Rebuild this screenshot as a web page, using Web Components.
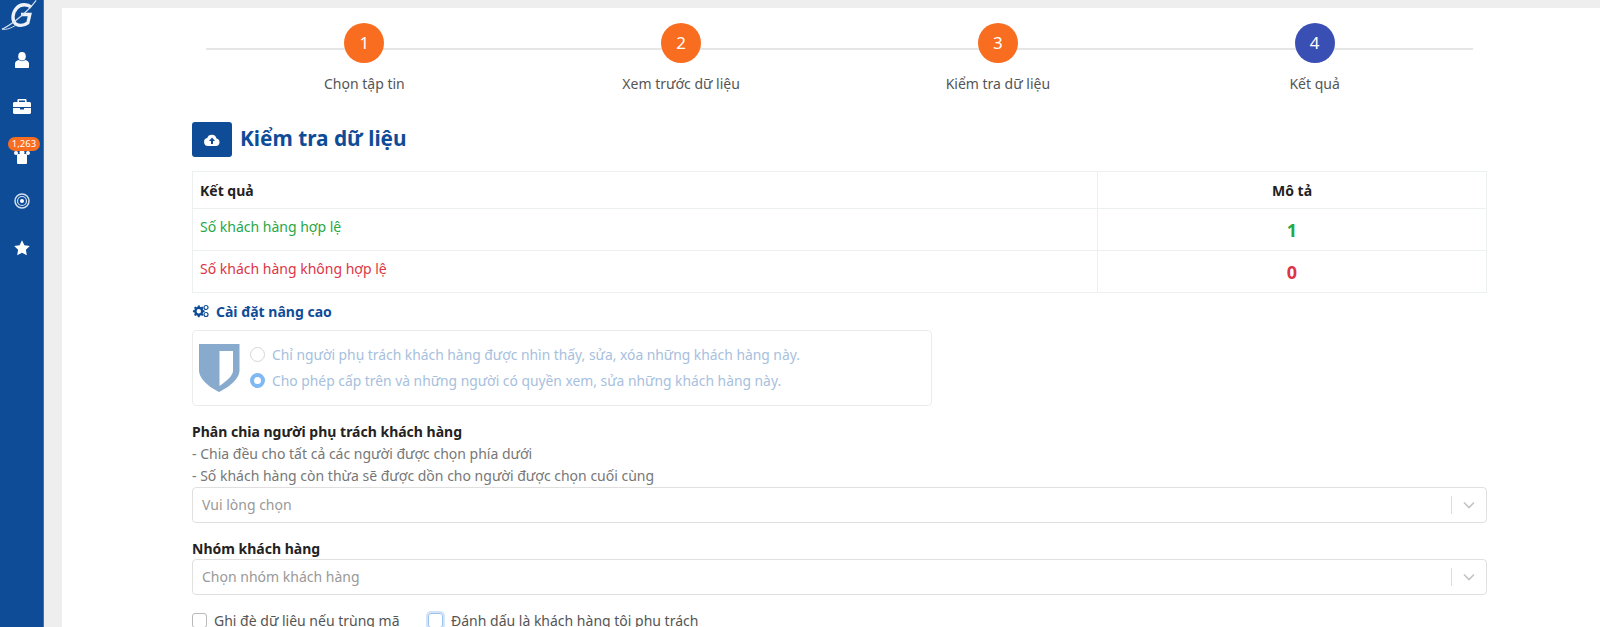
<!DOCTYPE html>
<html lang="vi"><head><meta charset="utf-8"><title>Kiểm tra dữ liệu</title>
<style>
html,body{margin:0;height:627px;overflow:hidden;background:#eee;font-family:"Noto Sans","Open Sans",sans-serif;font-size:14px;color:#444}
app-shell{height:627px}
</style></head><body>
<app-shell>
  <side-bar slot="side"></side-bar>
  <wizard-steps></wizard-steps>
  <page-title>Kiểm tra dữ liệu</page-title>
  <result-table></result-table>
  <advanced-settings></advanced-settings>
  <form-section><b slot="label">Phân chia người phụ trách khách hàng</b><div slot="help">- Chia đều cho tất cả các người được chọn phía dưới</div><div slot="help">- Số khách hàng còn thừa sẽ được dồn cho người được chọn cuối cùng</div><select-box>Vui lòng chọn</select-box></form-section>
  <form-section style="margin-top:15px"><b slot="label">Nhóm khách hàng</b><select-box style="margin-top:-1px">Chọn nhóm khách hàng</select-box></form-section>
  <check-row></check-row>
</app-shell>
<script>
function def(name,html){customElements.define(name,class extends HTMLElement{constructor(){super();this.attachShadow({mode:'open'}).innerHTML=html}})}
def('app-shell',`<style>:host{display:flex;background:#eee}
.side{flex:none}.wrap{flex:1;padding:8px 0 0 18px;min-width:0}
.page{background:#fff;height:619px;box-sizing:border-box;padding:0 113px 0 130px;overflow:hidden}</style>
<div class="side"><slot name="side"></slot></div><div class="wrap"><div class="page"><slot></slot></div></div>`);
def('side-bar',`<style>:host{display:flex;flex-direction:column;align-items:center;width:44px;height:627px;box-sizing:border-box;background:#0f4c98;border-right:1px solid #3f72b2;color:#fff}
.logo{height:31px;width:100%;flex:none}.it{height:47px;display:flex;align-items:center;justify-content:center;position:relative;flex:none;width:100%}
svg{display:block}.badge{position:absolute;left:8px;top:7px;width:32px;height:14px;border-radius:7px;background:#f96d20;color:#fff;font-size:9.5px;line-height:14px;text-align:center}</style>
<svg class="logo" viewBox="0 0 44 31"><path d="M32 7C28 3.500 21 3.500 17 8 12.500 13 12 21 16 24c4 2.500 9 1.500 12.500-1l2-8.500h-9" fill="none" stroke="#eef2f8" stroke-width="3.400"/><path d="M2 29.500C12 25 28 12 37 0" fill="none" stroke="#d5e0ef" stroke-width="1.200"/><path d="M2 29.500c5 1 10-1.500 14-4" fill="none" stroke="#d5e0ef" stroke-width="1"/></svg>
<div class="it" style="margin-top:5px"><svg width="14" height="16" viewBox="0 0 14 16" fill="#fff"><ellipse cx="7" cy="4.300" rx="3.800" ry="4.300"/><path d="M0 15v-3.500C0 9.500 2 8.500 3.500 8c2 1.500 5 1.500 7 0 1.500.5 3.500 1.500 3.500 3.500V15c0 .6-.4 1-1 1H1c-.6 0-1-.4-1-1z"/></svg></div>
<div class="it"><svg width="18" height="15" viewBox="0 0 18 15" fill="#fff"><path d="M6 3V1.500h6V3h1.600V1.200C13.600.5 13 0 12.300 0H5.700C5 0 4.400.5 4.400 1.200V3z"/><path d="M1.500 3h15c.8 0 1.500.7 1.500 1.500V8H0V4.500C0 3.700.7 3 1.500 3zM0 9h7v1.500h4V9h7v4.500c0 .8-.7 1.500-1.500 1.500h-15C.7 15 0 14.300 0 13.500z"/></svg></div>
<div class="it"><svg width="16" height="14" viewBox="0 0 16 14" style="margin-top:6px" fill="#fff"><rect x="3" y="4" width="10" height="10" rx="1"/><circle cx="2" cy="3" r="2"/><circle cx="14" cy="3" r="2"/><circle cx="8" cy="2.500" r="2.500"/></svg><span class="badge">1,263</span></div>
<div class="it"><svg width="16" height="16" viewBox="0 0 16 16" fill="none" stroke="#d3dfef"><circle cx="8" cy="8" r="7" stroke-width="1.500"/><circle cx="8" cy="8" r="4.500" stroke-width="1.200"/><circle cx="8" cy="8" r="2" fill="#fff" stroke="none"/></svg></div>
<div class="it"><svg width="16" height="16" viewBox="0 0 16 16" fill="#fff"><path d="M8 .3l2.400 4.900 5.400.8-3.900 3.800.9 5.400L8 12.800l-4.800 2.400.9-5.400L.2 6l5.400-.8z"/></svg></div>`);
def('wizard-steps',`<style>:host{display:grid;grid-template-columns:repeat(4,316.75px);margin-left:14px;padding-top:15px;height:99px;box-sizing:border-box;position:relative}
.line{position:absolute;left:0;width:1267px;top:40px;height:2px;background:#e6e6e6}
.s{display:flex;flex-direction:column;align-items:center;position:relative;font-size:14px;color:#555}
.c{width:40px;height:40px;border-radius:50%;background:#f96d20;color:#fff;font-size:17px;line-height:40px;text-align:center;margin-bottom:11px}
.c.on{background:#3a4fb3}span{line-height:20px}</style><div class="line"></div>
<div class="s"><div class="c">1</div><span>Chọn tập tin</span></div>
<div class="s"><div class="c">2</div><span>Xem trước dữ liệu</span></div>
<div class="s"><div class="c">3</div><span>Kiểm tra dữ liệu</span></div>
<div class="s"><div class="c on">4</div><span>Kết quả</span></div>`);
def('page-title',`<style>:host{display:flex;align-items:center;gap:8px;height:35px;margin-top:15px;color:#0f4c98;font-size:20.800px;font-weight:700;line-height:28px}
.b{width:40px;height:35px;background:#0f4c98;border-radius:3px;display:flex;align-items:center;justify-content:center}
.t{position:relative;top:-2px}</style>
<div class="b"><svg width="16" height="12" viewBox="0 0 16 12"><path fill="#fff" d="M4 12a4 4 0 0 1-.8-7.900A4.800 4.800 0 0 1 12.500 4.500 3.800 3.800 0 0 1 12 12z"/><path fill="#0f4c98" d="M8 3.500L11 7H9v3H7V7H5z"/></svg></div><span class="t"><slot></slot></span>`);
def('result-table',`<style>:host{display:block;margin-top:14px;font-size:14px}
table{border-collapse:collapse;width:1295px;table-layout:fixed}td,th{border:1px solid #edf0f0;padding:0 7px;text-align:left;vertical-align:middle;box-sizing:border-box}
th{height:37px;color:#222;font-weight:700;font-size:14px}tr.r td{height:42px}
.n{text-align:center;width:389px}.v{font-size:18px;font-weight:700;line-height:20px}.g{color:#28a745}.e{color:#dc3545}.t{position:relative;top:-3px}</style>
<table><tr><th>Kết quả</th><th class="n">Mô tả</th></tr>
<tr class="r"><td class="g"><span class="t">Số khách hàng hợp lệ</span></td><td class="n v g">1</td></tr>
<tr class="r"><td class="e"><span class="t">Số khách hàng không hợp lệ</span></td><td class="n v e">0</td></tr></table>`);
def('advanced-settings',`<style>:host{display:block;margin-top:8px}
.h{display:flex;align-items:center;gap:7px;height:20px;color:#0f4c98;font-weight:700;font-size:14px}
.box{margin-top:9px;width:740px;height:76px;box-sizing:border-box;border:1px solid #ececec;border-radius:4px;display:flex;align-items:center;padding:0 0 1px 6px;gap:10px}
.rows{display:flex;flex-direction:column;gap:6px;color:#a7c0dd;font-size:13.850px;margin-left:0}
.r{display:flex;align-items:center;gap:7px;height:20px}
.o{width:15px;height:15px;border-radius:50%;border:1px solid #d5d5d5;box-sizing:border-box;background:#fff}
.o.on{border:4.500px solid #7fb8f2}</style>
<div class="h"><svg width="17" height="14" viewBox="0 0 17 14" fill="#0f4c98"><path d="M6 1.500l1.500-.2.5 1.500 1 .5 1.400-.7 1 1.100-.7 1.300.4 1 1.500.5v1.500l-1.500.5-.4 1 .7 1.300-1 1.100-1.400-.7-1 .5-.5 1.500H6l-.5-1.500-1-.5-1.400.7-1-1.100.7-1.300-.4-1L.9 8V6.500l1.500-.5.4-1-.7-1.300 1-1.100 1.400.7 1-.5zM6.800 5A2.200 2.200 0 1 0 6.800 9.400 2.200 2.200 0 0 0 6.800 5z"/><circle cx="14" cy="3.500" r="2" fill="none" stroke="#0f4c98" stroke-width="1.200"/><circle cx="14" cy="10.500" r="2" fill="none" stroke="#0f4c98" stroke-width="1.200"/></svg><span>Cài đặt nâng cao</span></div>
<div class="box"><svg width="41" height="48" viewBox="0 0 41 48"><path fill="#87aacd" d="M0 0h40.500v26C40.500 36 28 44 20 48 12 44 0 36 0 26z"/><path fill="#fff" d="M20.500 7H34v20c0 4-6 10-13.500 15z"/></svg>
<div class="rows"><div class="r"><span class="o"></span><span>Chỉ người phụ trách khách hàng được nhìn thấy, sửa, xóa những khách hàng này.</span></div>
<div class="r"><span class="o on"></span><span>Cho phép cấp trên và những người có quyền xem, sửa những khách hàng này.</span></div></div></div>`);
def('form-section',`<style>:host{display:block;margin-top:15px;color:#777;font-size:14px;line-height:22px}
.l{color:#222;font-size:14px}</style>
<div class="l"><slot name="label"></slot></div><slot name="help"></slot><div><slot></slot></div>`);
def('select-box',`<style>:host{display:flex;align-items:center;width:1295px;height:36px;box-sizing:border-box;border:1px solid #e0e0e0;border-radius:4px;padding-left:9px;color:#999;font-size:14px;line-height:20px}
.t{flex:1}.d{width:1px;height:18px;background:#ddd}.a{width:34px;display:flex;justify-content:center}</style>
<div class="t"><slot></slot></div><div class="d"></div><div class="a"><svg width="12" height="8" viewBox="0 0 12 8"><path d="M1 1.500l5 5 5-5" fill="none" stroke="#c4c4c4" stroke-width="1.600"/></svg></div>`);
def('check-row',`<style>:host{display:flex;align-items:center;margin-top:13px;height:24px;color:#555;font-size:14px}
.k{width:15px;height:15px;box-sizing:border-box;border:1px solid #b9b9b9;border-radius:3px;margin-right:7px;flex:none}
.f{border-color:#9cc2ee;box-shadow:0 0 0 2px #d3e4f8;margin-right:8px}.a{display:flex;align-items:center}</style>
<div class="a" style="width:236px"><span class="k"></span><span>Ghi đè dữ liệu nếu trùng mã</span></div><span class="k f"></span><span>Đánh dấu là khách hàng tôi phụ trách</span>`);
</script>
</body></html>
